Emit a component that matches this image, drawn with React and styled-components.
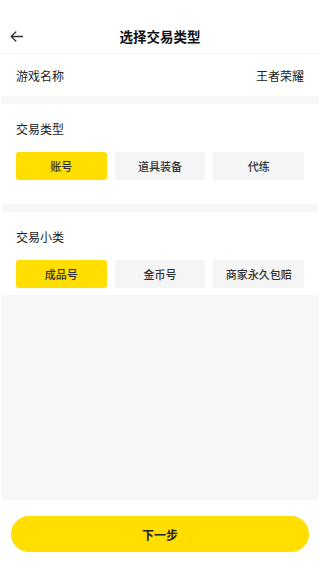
import styled, { createGlobalStyle } from "styled-components";

const GlobalStyle = createGlobalStyle`
  html, body {
    margin: 0;
    padding: 0;
    background: #fff;
  }
  body {
    font-family: "Noto Sans CJK SC", "Noto Sans", sans-serif;
    color: #222;
  }
  * {
    box-sizing: border-box;
  }
`;

const Page = styled.div`
  width: 100%;
  min-height: 100vh;
  display: flex;
  flex-direction: column;
  background: #fff;
`;

const Header = styled.div`
  height: 54px;
  padding-top: 19px;
  border-bottom: 1px solid #f3f3f3;
  display: grid;
  grid-template-columns: 40px 1fr 40px;
  align-items: start;
`;

const BackButton = styled.div`
  height: 34px;
  display: flex;
  align-items: center;
  padding-left: 10px;
`;

const Title = styled.div`
  height: 34px;
  line-height: 34px;
  text-align: center;
  font-size: 13.5px;
  font-weight: 700;
  color: #111;
`;

const InfoRow = styled.div`
  height: 42px;
  padding: 0 16px;
  display: flex;
  justify-content: space-between;
  align-items: center;
  font-size: 12px;
  color: #222;
`;

const Gap = styled.div`
  height: 8px;
  margin: 0 2px;
  background: #f7f7f7;
`;

const Section = styled.div`
  padding: 16px 16px ${(props) => props.$bottom}px;
`;

const Label = styled.div`
  font-size: 12px;
  line-height: 17px;
  color: #222;
`;

const Options = styled.div`
  margin-top: 15px;
  display: grid;
  grid-template-columns: repeat(3, 1fr);
  gap: 8px;
`;

const Option = styled.div`
  height: 28px;
  border-radius: 3px;
  display: flex;
  justify-content: center;
  align-items: center;
  font-size: 11px;
  font-weight: 500;
  color: #333;
  background: ${(props) => (props.$active ? "#ffde00" : "#f5f5f5")};
`;

const Filler = styled.div`
  flex: 1;
  margin: 0 2px;
  background: #f7f7f7;
`;

const Footer = styled.div`
  padding: 16px 11px;
`;

const NextButton = styled.div`
  height: 36px;
  border-radius: 18px;
  background: #ffde00;
  display: flex;
  justify-content: center;
  align-items: center;
  font-size: 12px;
  font-weight: 700;
  color: #222;
`;

function BackIcon() {
  return (
    <svg width="13" height="11" viewBox="0 0 13 11" fill="none">
      <path
        d="M12.5 5.5H1.2M5.8 1L1.2 5.5L5.8 10"
        stroke="#333"
        strokeWidth="1.3"
        strokeLinecap="round"
        strokeLinejoin="round"
      />
    </svg>
  );
}

const tradeTypes = ["账号", "道具装备", "代练"];
const subTypes = ["成品号", "金币号", "商家永久包赔"];

function App() {
  return (
    <>
      <GlobalStyle />
      <Page>
        <Header>
          <BackButton>
            <BackIcon />
          </BackButton>
          <Title>选择交易类型</Title>
          <div />
        </Header>
        <InfoRow>
          <span>游戏名称</span>
          <span>王者荣耀</span>
        </InfoRow>
        <Gap />
        <Section $bottom={24}>
          <Label>交易类型</Label>
          <Options>
            {tradeTypes.map((t, i) => (
              <Option key={t} $active={i === 0}>
                {t}
              </Option>
            ))}
          </Options>
        </Section>
        <Gap />
        <Section $bottom={7}>
          <Label>交易小类</Label>
          <Options>
            {subTypes.map((t, i) => (
              <Option key={t} $active={i === 0}>
                {t}
              </Option>
            ))}
          </Options>
        </Section>
        <Filler />
        <Footer>
          <NextButton>下一步</NextButton>
        </Footer>
      </Page>
    </>
  );
}

export default App;
